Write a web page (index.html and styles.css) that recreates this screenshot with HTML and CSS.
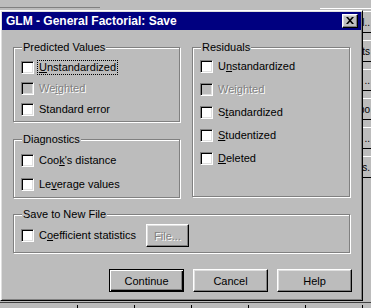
FILE: index.html
```html
<!DOCTYPE html>
<html>
<head>
<meta charset="utf-8">
<link rel="stylesheet" href="styles.css">
</head>
<body>
<div class="desk">
  <div class="bg-line-left"></div>
  <div class="bg-line-right"></div>
  <div class="bgwin-right">
    <div class="bgbtn b1"><span>l..</span></div>
    <div class="bgbtn b2"><span>sts</span></div>
    <div class="bgbtn b3"><span>..</span></div>
    <div class="bgbtn b4"><span>po</span></div>
    <div class="bgbtn b5"><span>..</span></div>
    <div class="bgbtn b6"><span>s.</span></div>
  </div>
  <div class="bgwin-bottom">
    <div class="cell c0"></div><div class="cell"></div><div class="cell"></div><div class="cell"></div><div class="cell"></div><div class="cell"></div><div class="cell"></div>
  </div>

  <div class="dlg">
    <div class="titlebar">
      <span class="title">GLM - General Factorial: Save</span>
      <span class="close"><svg width="8" height="7" viewBox="0 0 8 7"><path d="M0 0h2l2 2.2L6 0h2L5 3.5 8 7H6L4 4.8 2 7H0l3-3.5z" fill="#000"/></svg></span>
    </div>
    <div class="body">
      <div class="cols">
        <div class="col">
          <div class="grp pv">
            <span class="glabel">Predicted Values</span>
            <div class="rows gap8 m7">
              <div class="row"><span class="cb"></span><span class="lbl focus"><u>U</u>nstandardized</span></div>
              <div class="row dis"><span class="cb"></span><span class="lbl">We<u>i</u>ghted</span></div>
              <div class="row"><span class="cb"></span><span class="lbl">Standard error</span></div>
            </div>
          </div>
          <div class="grp diag">
            <span class="glabel">Diagnostics</span>
            <div class="rows gap11 m8">
              <div class="row"><span class="cb"></span><span class="lbl">Coo<u>k</u>'s distance</span></div>
              <div class="row"><span class="cb"></span><span class="lbl">Le<u>v</u>erage values</span></div>
            </div>
          </div>
        </div>
        <div class="grp resid">
          <span class="glabel">Residuals</span>
          <div class="rows gap10 m6">
            <div class="row"><span class="cb"></span><span class="lbl">U<u>n</u>standardized</span></div>
            <div class="row dis"><span class="cb"></span><span class="lbl">Wei<u>g</u>hted</span></div>
            <div class="row"><span class="cb"></span><span class="lbl">S<u>t</u>andardized</span></div>
            <div class="row"><span class="cb"></span><span class="lbl"><u>S</u>tudentized</span></div>
            <div class="row"><span class="cb"></span><span class="lbl"><u>D</u>eleted</span></div>
          </div>
        </div>
      </div>
      <div class="grp save">
        <span class="glabel">Save to New File</span>
        <div class="saverow">
          <span class="cb"></span><span class="lbl">C<u>o</u>efficient statistics</span>
          <span class="btn file">File...</span>
        </div>
      </div>
      <div class="buttons">
        <span class="btn default">Continue</span>
        <span class="btn">Cancel</span>
        <span class="btn">Help</span>
      </div>
    </div>
  </div>
</div>
</body>
</html>
```
FILE: styles.css
```css
* { box-sizing: border-box; }
html, body { margin: 0; padding: 0; }
body {
  background: #bcbcbc;
  font-family: "Liberation Sans", Arial, sans-serif;
  font-size: 11px;
  color: #000;
}
.desk {
  position: relative;
  width: 371px;
  height: 308px;
  overflow: hidden;
  background: #bcbcbc;
}
.bg-line-left {
  position: absolute;
  left: 0; top: 7px;
  width: 100px; height: 1px;
  background: #808080;
}
.bg-line-right {
  position: absolute;
  left: 320px; top: 8px;
  width: 51px; height: 1px;
  background: #fff;
}
.bgwin-right {
  position: absolute;
  left: 300px; top: 11px;
  width: 71px;
  display: flex;
  flex-direction: column;
}
.bgbtn {
  height: 22px;
  border-top: 1px solid #fff;
  border-bottom: 1px solid #000;
  margin-bottom: 7px;
  display: flex;
  align-items: center;
  justify-content: flex-end;
  padding-right: 1px;
  font-size: 10px;
  white-space: nowrap;
}
.bgwin-bottom {
  position: absolute;
  left: 0; top: 302px;
  width: 371px; height: 6px;
  border-top: 1px solid #404040;
  display: flex;
}
.cell {
  width: 57px;
  height: 5px;
  margin-top: 2px;
  border-right: 1px solid #000;
  flex: none;
}
.cell.c0 { width: 78px; }

.dlg {
  position: absolute;
  left: 0; top: 10px;
  width: 363px; height: 291px;
  border: 1px solid;
  border-color: #fff #000 #000 #fff;
  box-shadow: inset 1px 1px 0 #dfdfdf, inset -1px -1px 0 #808080;
  padding: 1px;
  background: #bcbcbc;
  display: flex;
  flex-direction: column;
}
.titlebar {
  height: 18px;
  background: #000080;
  display: flex;
  align-items: center;
  justify-content: space-between;
  padding: 0 3px 0 4px;
}
.title {
  color: #fff;
  font-weight: bold;
  font-size: 12px;
  line-height: 14px;
  white-space: nowrap;
}
.close {
  width: 16px; height: 14px;
  background: #c0c0c0;
  border: 1px solid;
  border-color: #fff #000 #000 #fff;
  box-shadow: inset -1px -1px 0 #808080, inset 1px 1px 0 #dfdfdf;
  display: flex;
  align-items: center;
  justify-content: center;
  padding: 0 0 1px 0;
}
.close svg { display: block; }

.body {
  padding: 17px 9px 0 11px;
  display: flex;
  flex-direction: column;
}
.cols {
  display: flex;
  gap: 12px;
}
.col {
  display: flex;
  flex-direction: column;
  gap: 17px;
}
.grp {
  border: 1px solid #808080;
  box-shadow: 1px 1px 0 #fff, inset 1px 1px 0 #fff;
  padding: 0 7px;
  display: flex;
  flex-direction: column;
  align-items: flex-start;
}
.pv { width: 167px; height: 75px; }
.diag { width: 167px; height: 59px; }
.resid { width: 158px; height: 150px; }
.save { width: 337px; height: 39px; margin-top: 16px; }
.glabel {
  margin: -7px 0 0 1px;
  padding: 0 1px;
  line-height: 13px;
  height: 13px;
  background: #bcbcbc;
  white-space: nowrap;
}
.rows { display: flex; flex-direction: column; }
.gap8 { gap: 8px; }
.gap10 { gap: 10px; }
.gap11 { gap: 11px; }
.m6 { margin-top: 6px; }
.m7 { margin-top: 7px; }
.m8 { margin-top: 8px; }
.row, .saverow {
  display: flex;
  align-items: center;
  height: 13px;
}
.cb {
  width: 13px; height: 13px;
  flex: none;
  background: #fff;
  border: 1px solid;
  border-color: #808080 #fff #fff #808080;
  box-shadow: inset 1px 1px 0 #000, inset -1px -1px 0 #dfdfdf;
}
.lbl {
  margin-left: 5px;
  line-height: 13px;
  white-space: nowrap;
}
.focus { outline: 1px dotted #000; outline-offset: 0; padding: 0 1px; margin-left: 4px; }
.dis .cb { background: #bcbcbc; }
.dis .lbl { color: #808080; text-shadow: 1px 1px 0 #fff; }
u { text-decoration-thickness: 1px; text-underline-offset: 1px; }

.saverow { height: 23px; margin-top: 3px; }
.btn {
  display: flex;
  align-items: center;
  justify-content: center;
  width: 75px; height: 23px;
  border: 1px solid;
  border-color: #fff #000 #000 #fff;
  box-shadow: inset -1px -1px 0 #808080, inset 1px 1px 0 #dfdfdf;
  white-space: nowrap;
  flex: none;
}
.btn.file {
  width: 43px;
  margin-left: 10px;
  color: #808080;
  text-shadow: 1px 1px 0 #fff;
}
.btn.default {
  border-color: #000;
  box-shadow: inset 1px 1px 0 #fff, inset -1px -1px 0 #000, inset -2px -2px 0 #808080;
}
.buttons {
  display: flex;
  justify-content: flex-end;
  gap: 9px;
  margin-top: 16px;
}
```
